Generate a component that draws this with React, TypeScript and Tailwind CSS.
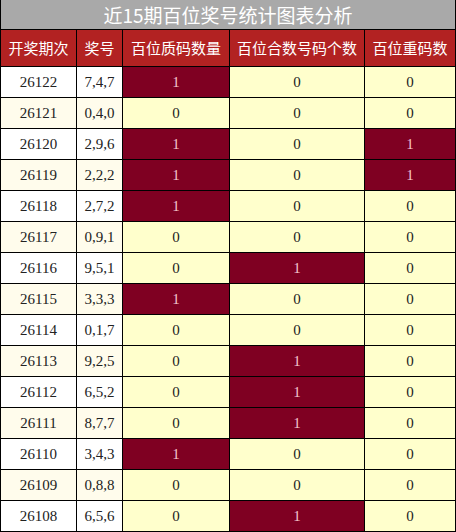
import React from 'react';

const rows: [string, string, number, number, number][] = [
  ['26122', '7,4,7', 1, 0, 0],
  ['26121', '0,4,0', 0, 0, 0],
  ['26120', '2,9,6', 1, 0, 1],
  ['26119', '2,2,2', 1, 0, 1],
  ['26118', '2,7,2', 1, 0, 0],
  ['26117', '0,9,1', 0, 0, 0],
  ['26116', '9,5,1', 0, 1, 0],
  ['26115', '3,3,3', 1, 0, 0],
  ['26114', '0,1,7', 0, 0, 0],
  ['26113', '9,2,5', 0, 1, 0],
  ['26112', '6,5,2', 0, 1, 0],
  ['26111', '8,7,7', 0, 1, 0],
  ['26110', '3,4,3', 1, 0, 0],
  ['26109', '0,8,8', 0, 0, 0],
  ['26108', '6,5,6', 0, 1, 0],
];

const headers = ['开奖期次', '奖号', '百位质码数量', '百位合数号码个数', '百位重码数'];
const widths = ['w-[76px]', 'w-[46px]', 'w-[107px]', 'w-[135px]', 'w-[91px]'];

function Flag({ v }: { v: number }) {
  return v ? (
    <td className="border border-black bg-[#7f0022] text-[#f3c6cc] text-center">1</td>
  ) : (
    <td className="border border-black bg-[#ffffcc] text-[#222] text-center">0</td>
  );
}

export default function App() {
  return (
    <div className="w-[456px] h-[532px] bg-white overflow-hidden">
      <div className="h-[29px] bg-[#a9a9a9] border-l border-r border-black flex items-center justify-center text-white text-[19px] font-['Noto_Sans_CJK_SC',sans-serif] leading-none">
        近15期百位奖号统计图表分析
      </div>
      <table className="w-[456px] table-fixed border-collapse font-['Liberation_Serif',serif] text-[15px]">
        <thead>
          <tr className="h-[37px] bg-[#b22222] text-white text-[15px] font-['Noto_Sans_CJK_SC',sans-serif]">
            {headers.map((h, i) => (
              <th key={h} className={`${widths[i]} border border-black font-normal text-center`}>
                {h}
              </th>
            ))}
          </tr>
        </thead>
        <tbody>
          {rows.map((r, i) => (
            <tr key={r[0]} className="h-[31px]">
              <td className={`border border-black text-center text-[#222] ${i % 2 ? 'bg-[#fffcec]' : 'bg-white'}`}>{r[0]}</td>
              <td className={`border border-black text-center text-[#222] ${i % 2 ? 'bg-[#fffcec]' : 'bg-white'}`}>{r[1]}</td>
              <Flag v={r[2]} />
              <Flag v={r[3]} />
              <Flag v={r[4]} />
            </tr>
          ))}
        </tbody>
      </table>
    </div>
  );
}
